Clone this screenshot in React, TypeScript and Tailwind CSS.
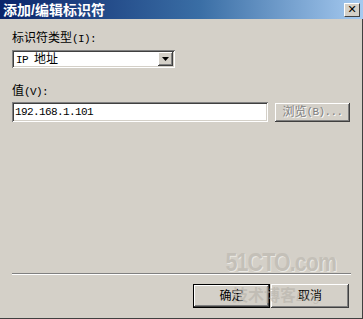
const FONT = { fontFamily: '"Liberation Sans", "Noto Sans CJK SC", sans-serif' }

const SUNKEN = 'shadow-[inset_1px_1px_0_#808080,inset_-1px_-1px_0_#ffffff,inset_2px_2px_0_#404040,inset_-2px_-2px_0_#d4d0c8]'
const RAISED = 'shadow-[inset_-1px_-1px_0_#404040,inset_1px_1px_0_#ffffff,inset_-2px_-2px_0_#808080,inset_2px_2px_0_#d4d0c8]'

// ascii parts look like SimSun half-width glyphs (6px each)
function Mono({ children }: { children: React.ReactNode }) {
  return <span className="font-['Liberation_Mono',monospace] text-[11px] tracking-[-0.6px]">{children}</span>
}

export default function App() {
  return (
    <div style={FONT} className="relative w-[363px] h-[319px] bg-[#d4d0c8] text-[12px] text-black flex flex-col overflow-hidden shadow-[inset_-1px_-1px_0_#404040]">
      {/* Title bar */}
      <div className="h-[19px] shrink-0 grid grid-cols-[1fr_16px] items-center pl-[3px] pr-[3px] bg-[linear-gradient(90deg,#0a246a_0%,#3a6ea5_55%,#a6caf0_100%)]">
        <span className="text-white font-bold text-[14px] leading-none">添加/编辑标识符</span>
        <span className="w-[16px] h-[14px] grid place-items-center bg-[#d4d0c8] border border-t-white border-l-white border-r-[#404040] border-b-[#404040] text-black font-bold text-[11px] leading-none font-['DejaVu_Sans',sans-serif]">
          ✕
        </span>
      </div>

      {/* Body */}
      <div className="flex-1 flex flex-col px-[12px] pt-[12px]">
        <label className="leading-[14px]">标识符类型<Mono>(I):</Mono></label>
        <div className={`mt-[4px] w-[163px] h-[18px] bg-white flex items-center justify-between p-[2px] ${SUNKEN}`}>
          <span className="pl-[2px] leading-none"><Mono>IP </Mono>地址</span>
          <div className={`w-[15px] h-[14px] bg-[#d4d0c8] flex items-center justify-center ${RAISED}`}>
            <svg width="7" height="4" viewBox="0 0 7 4"><path d="M0 0h7L3.5 4z" fill="#000" /></svg>
          </div>
        </div>

        <label className="mt-[16px] leading-[14px]">值<Mono>(V):</Mono></label>
        <div className="mt-[3px] flex items-center gap-[7px]">
          <div className={`w-[256px] h-[20px] bg-white flex items-center pl-[3px] ${SUNKEN}`}>
            <Mono>192.168.1.101</Mono>
          </div>
          <button className={`w-[75px] h-[19px] flex items-center justify-center text-[#808080] [text-shadow:1px_1px_0_#fff] ${RAISED}`}>
            浏览<Mono>(B)...</Mono>
          </button>
        </div>

        <div className="mt-auto mb-[9px] h-[2px] border-t border-[#808080] border-b border-b-white" />
        <div className="mb-[11px] flex justify-end gap-[1px] pr-[2px]">
          <button className="w-[77px] h-[24px] flex items-center justify-center border border-black shadow-[inset_-1px_-1px_0_#404040,inset_1px_1px_0_#ffffff,inset_-2px_-2px_0_#808080]">
            确定
          </button>
          <button className={`w-[78px] h-[24px] flex items-center justify-center ${RAISED}`}>
            取消
          </button>
        </div>
      </div>

      {/* 51CTO watermark */}
      <div className="absolute left-[212px] top-[249px] w-[150px] pointer-events-none select-none text-[#c4c0b8] font-bold text-[26px] leading-none tracking-[-1px] scale-x-[0.82] [text-shadow:1px_1px_0_#ebe9e4]">
        51CTO.com
      </div>
      <div className="absolute left-[232px] top-[288px] pointer-events-none select-none text-[#b4b0a8]/60 font-bold text-[16px] leading-none">
        技术博客<span className="text-[12px] font-normal italic">Blog</span>
      </div>
    </div>
  )
}
